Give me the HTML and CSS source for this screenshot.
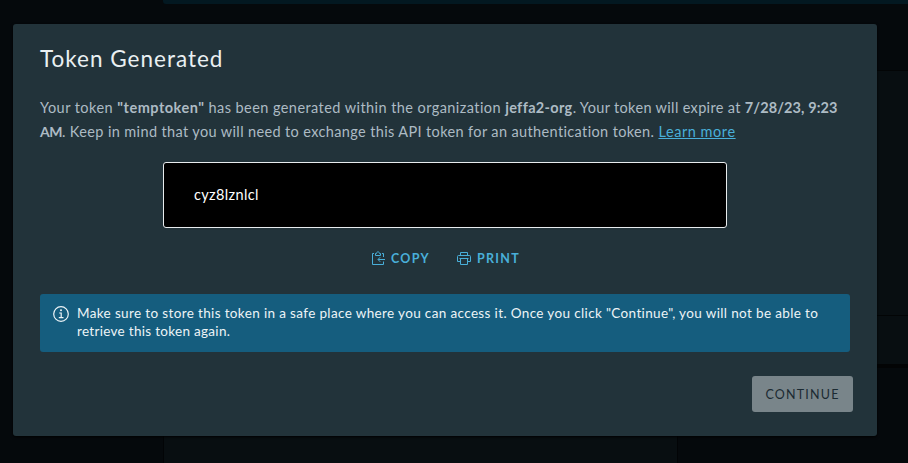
FILE: index.html
```html
<!DOCTYPE html>
<html lang="en">
<head>
<meta charset="utf-8">
<title>Token Generated</title>
<link rel="stylesheet" href="styles.css">
</head>
<body>
<div class="backdrop">
  <div class="page-banner"></div>
  <div class="page-panel"></div>
  <div class="page-aside"><div class="aside-row"></div><div class="aside-footer"></div></div>
</div>
<main class="modal" role="dialog" aria-labelledby="title">
  <h1 class="title" id="title">Token Generated</h1>
  <p class="description"><span class="run-a">Your token </span><b class="name">"temptoken"</b><span class="run-b"> has been generated within the organization </span><b class="org">jeffa2-org</b><span class="run-c">. Your token will expire at </span><b class="date">7/28/23, 9:23</b><br><b class="meridiem">AM</b><span class="run-d">. Keep in mind that you will need to exchange this API token for an authentication token. </span><a class="learn" href="#">Learn more</a></p>
  <div class="token"><span class="token-value">cyz8lznlcl</span></div>
  <div class="actions">
    <button class="action">
      <svg class="icon" viewBox="0 0 14 15" fill="none" stroke="currentColor"><path d="M3 2.5H1.5v11h11v-3M11 2.5h1.5v3.5M4.5 4.5v-2h1c0-2.2 3-2.2 3 0h1v2zM14 8.5H7.2M9.2 6.2 7 8.5l2.2 2.3"/></svg>
      <span class="copy-label">COPY</span>
    </button>
    <button class="action">
      <svg class="icon" viewBox="0 0 14 15" fill="none" stroke="currentColor"><path d="M3.5 4.5v-3h7v3M3.5 10.5h-3v-5q0-1 1-1h11q1 0 1 1v5h-3M2.5 7.5h9M3.5 7.5v6h7v-6"/></svg>
      <span class="print-label">PRINT</span>
    </button>
  </div>
  <div class="alert">
    <svg class="info" viewBox="0 0 16 16" fill="none" stroke="currentColor"><circle cx="8" cy="8" r="7.3" stroke-width="1.2"/><path d="M6.2 7h2v4.6M5.8 11.7h4.7" stroke-width="1.2"/><circle cx="8" cy="4.3" r="1" fill="currentColor" stroke="none"/></svg>
    <p class="alert-text"><span class="alert-first">Make sure to store this token in a safe place where you can access it. Once you click "Continue", you will not be able to</span><br><span class="alert-second">retrieve this token again.</span></p>
  </div>
  <div class="footer"><button class="continue"><span class="continue-label">CONTINUE</span></button></div>
</main>
</body>
</html>
```

FILE: styles.css
```css
* { box-sizing: border-box; }
body {
  margin: 0;
  width: 908px;
  height: 463px;
  overflow: hidden;
  background: #05090c;
  font-family: Lato, "Open Sans", sans-serif;
  padding: 24px 31px 27px 13px;
}
.backdrop {
  position: absolute;
  inset: 0;
  z-index: -1;
  display: grid;
  grid-template-columns: 163px 515px 1fr;
  grid-template-rows: 4px 1fr;
}
.page-banner { grid-column: 2 / 4; background: #031821; border-bottom-left-radius: 3px; }
.page-panel { grid-column: 2; margin-top: 66px; background: #080e11; border: solid #020406; border-width: 0 1px; }
.page-aside { padding-top: 66px; }
.aside-row { height: 246px; background: #080e11; border: solid #030506; border-width: 1px 0; }
.aside-footer { height: 52px; background: #080e11; border-bottom: 4px solid #030405; }
.modal {
  height: 412px;
  padding: 23px 27px 24px;
  border-radius: 3px;
  background: #22333a;
  color: #adbbc4;
  box-shadow: 0 1px 3px #000000;
}
.title {
  margin: 0;
  font-size: 22.5px;
  line-height: 24px;
  font-weight: 400;
  color: #eaf0f2;
  letter-spacing: 1px;
}
.description {
  margin: 25px 0 0;
  font-size: 14.5px;
  line-height: 24px;
  white-space: nowrap;
}
.run-a { letter-spacing: 0.46px; }
.name { letter-spacing: 0.5px; }
.run-b { letter-spacing: 0.43px; }
.org { letter-spacing: 0.33px; }
.run-c { letter-spacing: 0.34px; }
.date { letter-spacing: 0.1px; }
.meridiem { font-size: 14px; letter-spacing: -0.5px; }
.run-d { letter-spacing: 0.37px; }
.learn { color: #49afd9; letter-spacing: 0.55px; }
.token {
  width: 564px;
  height: 66px;
  margin: 18px auto 0 123px;
  padding: 0 30px 2px;
  display: flex;
  align-items: center;
  border: 1px solid #e8ecee;
  border-radius: 3px;
  background: #000;
  color: #fff;
  font-size: 14.5px;
  letter-spacing: 0.35px;
}
.actions { display: flex; gap: 27px; height: 24px; margin: 18px 0 0 331px; }
button { border: 0; font: inherit; }
.action {
  display: flex;
  align-items: center;
  gap: 6px;
  padding: 0;
  background: none;
  color: #49afd9;
  font-size: 12.5px;
  font-weight: 700;
  letter-spacing: 1.3px;
}
.icon { width: 14px; height: 15px; stroke-width: 1; }
.alert {
  display: flex;
  gap: 8px;
  height: 58px;
  margin-top: 24px;
  padding: 11px 13px;
  border-radius: 3px;
  background: #155d7e;
  color: #edf4f7;
}
.info { width: 16px; height: 16px; flex: none; margin-top: 1px; }
.alert-text { margin: -1px 0 0; font-size: 13.5px; line-height: 18px; white-space: nowrap; letter-spacing: 0.36px; }
.alert-second { letter-spacing: 0.3px; }
.footer { display: flex; justify-content: flex-end; margin: 24px -3px 0 0; }
.continue {
  width: 101px;
  height: 36px;
  padding: 0;
  border-radius: 3px;
  background: #79858a;
  color: #1b2a32;
  font-size: 12.5px;
  letter-spacing: 1.2px;
}
```
